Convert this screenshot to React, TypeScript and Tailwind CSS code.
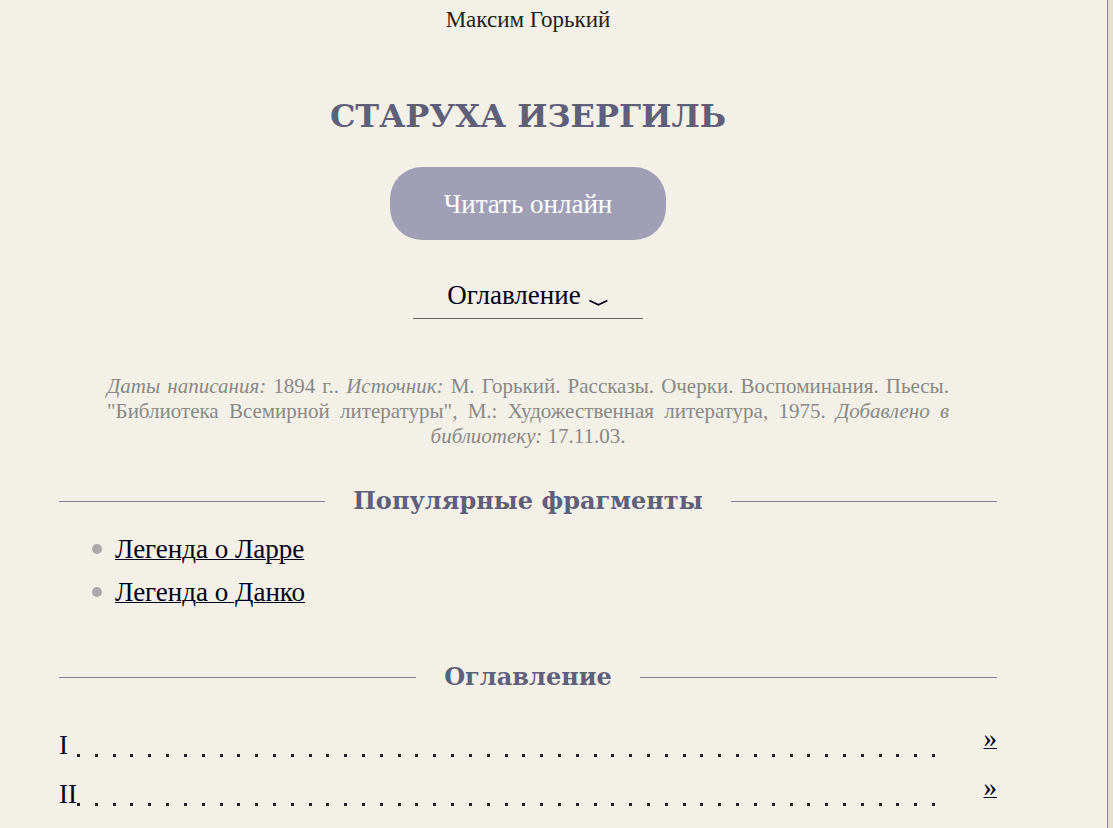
const fragments = ["Легенда о Ларре", "Легенда о Данко"];
const chapters = ["I", "II"];
const leaderDots = Array.from({ length: 49 }, (_, i) => i);

function SectionHeading({ children, id }: { children: string; id: string }) {
  return (
    <div className="flex items-center gap-7">
      <span className="h-px flex-1 bg-[#808090]" />
      <h2
        id={id}
        className="font-['DejaVu_Serif',serif] text-2xl leading-7 font-bold text-[#5f5f7a]"
      >
        {children}
      </h2>
      <span className="h-px flex-1 bg-[#808090]" />
    </div>
  );
}

export default function App() {
  return (
    <div className="min-h-screen bg-[#e5dfd0] pr-[5px] font-['Liberation_Serif',serif] text-[#222222]">
      <main className="min-h-screen border-r border-[#808090] bg-[#f3f0e7] pr-[110px] pl-[59px]">
        <header className="flex flex-col items-center">
          <p className="pt-[7px] text-[23px] leading-[26px]">Максим Горький</p>
          <h1 className="mt-[63px] font-['DejaVu_Serif',serif] text-[32px] leading-10 font-bold text-[#5f5f7a]">
            СТАРУХА ИЗЕРГИЛЬ
          </h1>
          <button
            type="button"
            className="mt-[31px] h-[73px] rounded-[32px] bg-[#a09fb5] px-[54px] text-[27px] leading-8 text-white"
          >
            Читать онлайн
          </button>
          <a
            href="#contents"
            className="mt-[39px] flex items-center gap-2 border-b border-[#666666] px-[34px] pb-[7px] text-[27px] leading-8 text-[#000020]"
          >
            Оглавление
            <svg
              className="mt-4 h-2 w-5"
              viewBox="0 0 20 8"
              fill="none"
              stroke="currentColor"
              strokeWidth="1.5"
              aria-hidden="true"
            >
              <path d="M0.4 1.5 L9.4 5.8 L18.4 1.5" />
            </svg>
          </a>
        </header>

        <p className="mx-12 mt-[55px] text-justify text-[21px] leading-[25px] text-[#888888] [text-align-last:center]">
          <i>Даты написания:</i> 1894 г.. <i>Источник:</i> М. Горький. Рассказы. Очерки.
          Воспоминания. Пьесы. "Библиотека Всемирной литературы", М.: Художественная литература,
          1975. <i>Добавлено в библиотеку:</i> 17.11.03.
        </p>

        <section aria-labelledby="fragments" className="mt-[38px]">
          <SectionHeading id="fragments">Популярные фрагменты</SectionHeading>
          <ul className="mt-[18px] flex flex-col gap-[11px] pl-[33px]">
            {fragments.map((title) => (
              <li key={title} className="flex items-center gap-[13px]">
                <span className="size-[10px] rounded-full bg-[#aaaaaa]" />
                <a
                  href="#fragments"
                  className="text-[27px] leading-8 text-[#000020] underline decoration-1"
                >
                  {title}
                </a>
              </li>
            ))}
          </ul>
        </section>

        <section aria-labelledby="contents" className="mt-[55px]">
          <SectionHeading id="contents">Оглавление</SectionHeading>
          <ol className="mt-[31px] flex flex-col gap-[9px]">
            {chapters.map((chapter) => (
              <li
                key={chapter}
                className="flex h-10 items-start text-[27px] leading-8 text-[#000020]"
              >
                <span className="mt-[7px] w-[18px]">{chapter}</span>
                <span
                  className="mr-12 flex h-[35px] flex-1 items-end justify-between"
                  aria-hidden="true"
                >
                  {leaderDots.map((dot) => (
                    <span key={dot} className="size-[3px] bg-[#222222]" />
                  ))}
                </span>
                <a
                  href="#contents"
                  className="underline decoration-1"
                  aria-label={`Глава ${chapter}`}
                >
                  »
                </a>
              </li>
            ))}
          </ol>
        </section>
      </main>
    </div>
  );
}
